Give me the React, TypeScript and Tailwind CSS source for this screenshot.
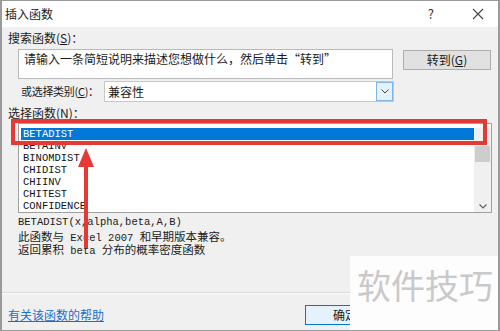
import React from "react";

const cjk = '"Noto Sans CJK SC", "Microsoft YaHei", sans-serif';
const mono = '"Liberation Mono", "Noto Sans CJK SC", monospace';

function C({ children }: { children: React.ReactNode }) {
  return <span style={{ fontFamily: cjk }} className="text-[11.5px] leading-[13px]">{children}</span>;
}

export default function App() {
  const rows = ["BETADIST", "BETAINV", "BINOMDIST", "CHIDIST", "CHIINV", "CHITEST", "CONFIDENCE"];
  return (
    <div
      className="relative w-[500px] h-[331px] overflow-hidden bg-[#f0f0f0] border-l-2 border-t border-r-2 border-b border-[#9a9a9a] text-[#1a1a1a]"
      style={{ fontFamily: cjk }}
    >
      {/* title bar */}
      <div className="h-[26px] bg-white flex items-center pl-[3px] pr-[12px] text-[12px]">
        <span>插入函数</span>
        <span className="ml-auto mr-[38px] text-[13px] text-[#333]">?</span>
        <svg width="12" height="12" viewBox="0 0 12 12" className="mr-[2px]">
          <path d="M1 1 L11 11 M11 1 L1 11" stroke="#444" strokeWidth="1.1" />
        </svg>
      </div>

      <div className="flex flex-col">
        <div className="h-[20px] mt-[1px] flex items-center pl-[6px] text-[12px]">搜索函数(<span className="underline">S</span>)：</div>
        <div className="flex items-start pl-[16px] mt-[1px]">
          <div className="w-[375px] h-[30px] bg-white border border-[#b9b9b9] pl-[5px] pt-[1px] text-[12px] leading-[16px]">
            请输入一条简短说明来描述您想做什么，然后单击“转到”
          </div>
          <div className="ml-[10px] mt-[1px] w-[88px] h-[20px] bg-[#e1e1e1] border border-[#adadad] flex items-center justify-center text-[12px]">
            转到(<span className="underline">G</span>)
          </div>
        </div>
        <div className="flex items-center mt-[2px] h-[21px]">
          <span className="pl-[19px] w-[102px] text-[11px] whitespace-nowrap tracking-[-0.3px]">或选择类别(<span className="underline">C</span>)：</span>
          <div className="w-[290px] h-[21px] bg-white border border-[#c8c8c8] flex items-center pl-[3px] text-[12px]">
            <span>兼容性</span>
            <div className="ml-auto w-[17px] h-[19px] bg-[#e5f1fb] border border-[#7eb4ea] flex items-center justify-center">
              <svg width="8" height="5" viewBox="0 0 8 5"><path d="M0.5 0.5 L4 4 L7.5 0.5" stroke="#444" fill="none" strokeWidth="1" /></svg>
            </div>
          </div>
        </div>
        <div className="h-[20px] mt-[1px] flex items-center pl-[6px] text-[12px]">选择函数(<span className="underline">N</span>)：</div>

        {/* list */}
        <div className="ml-[16px] w-[474px] h-[90px] bg-white border border-[#a0a0a0] flex pt-[4px] pl-[2px]">
          <div className="flex-1 flex flex-col" style={{ fontFamily: mono }}>
            {rows.map((r, i) => (
              <div
                key={r}
                className={
                  "h-[12px] leading-[12px] text-[10.5px] pl-[2px] " +
                  (i === 0 ? "bg-[#0078d7] text-white" : "text-[#111]")
                }
              >
                {r}
              </div>
            ))}
          </div>
          <div className="w-[17px] h-[84px] bg-[#f0f0f0] flex flex-col items-center">
            <div className="h-[17px]" />
            <div className="w-[15px] h-[16px] bg-[#cdcdcd] mt-[1px]" />
            <div className="mt-auto mb-[3px]">
              <svg width="8" height="5" viewBox="0 0 8 5"><path d="M0.5 0.5 L4 4 L7.5 0.5" stroke="#606060" fill="none" strokeWidth="1.2" /></svg>
            </div>
          </div>
        </div>

        {/* description */}
        <div className="pl-[16px] mt-[3px] text-[10.5px] leading-[13px]" style={{ fontFamily: mono }}>
          <div className="h-[13.5px] overflow-visible whitespace-nowrap">BETADIST(x,alpha,beta,A,B)</div>
          <div className="h-[13.5px] overflow-visible whitespace-nowrap"><C>此函数与</C> Excel 2007 <C>和早期版本兼容。</C></div>
          <div className="h-[13.5px] overflow-visible whitespace-nowrap"><C>返回累积</C> beta <C>分布的概率密度函数</C></div>
        </div>

        <div className="mt-[35px] h-[1px] bg-[#d7d7d7]" />
        <div className="h-[1px] bg-white" />

        <div className="flex items-center mt-[11px] h-[20px]">
          <span className="pl-[6px] text-[12px] text-[#1e6ec8] underline">有关该函数的帮助</span>
          <div className="ml-[201px] w-[80px] h-[20px] bg-[#e5f1fb] border border-[#0078d7] flex items-center justify-center text-[12px]">
            确定
          </div>
        </div>
      </div>

      {/* red highlight box */}
      <div className="absolute left-[9px] top-[118px] w-[476px] h-[26px] border-[4px] border-[#e53935]" />

      {/* red arrow */}
      <svg className="absolute left-[74px] top-[147px]" width="20" height="100" viewBox="0 0 20 100">
        <polygon points="10,0 2,19 18,19" fill="#e53935" />
        <rect x="8" y="18" width="4" height="82" fill="#e53935" />
      </svg>

      {/* watermark */}
      <div className="absolute left-[348px] top-[255px] w-[152px] h-[76px] bg-[#fdfdfd] flex items-start pl-[7px] pt-[9px]">
        <span className="text-[34px] leading-[40px] text-[#c9c9c9]" style={{ fontFamily: cjk }}>软件技巧</span>
      </div>
    </div>
  );
}
